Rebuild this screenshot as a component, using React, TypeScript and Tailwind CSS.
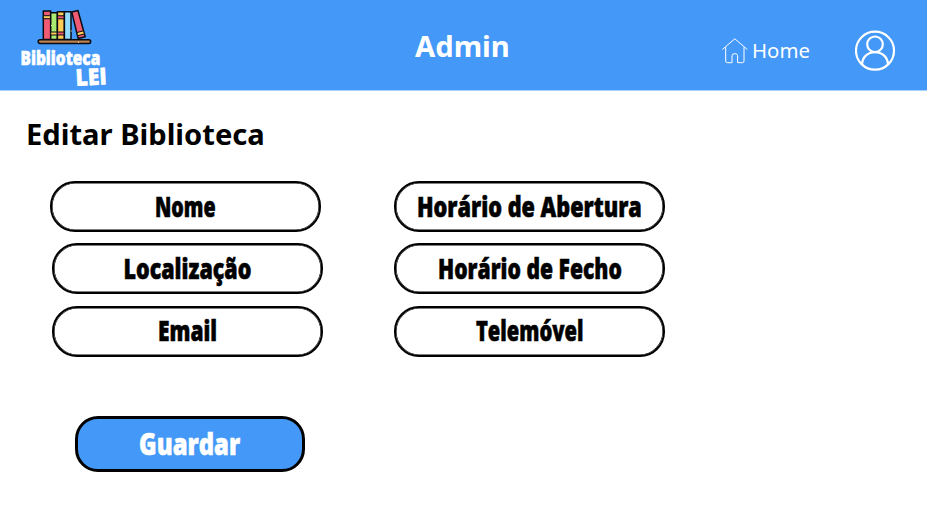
import { useLayoutEffect, useRef, useState } from "react";

// Squeezes a heavy lettering line horizontally so that it fills the given width.
function Lettering({ text, width, className = "" }: { text: string; width: number; className?: string }) {
  const ref = useRef<HTMLSpanElement>(null);
  const [scale, setScale] = useState(1);
  useLayoutEffect(() => {
    if (ref.current) setScale(width / ref.current.offsetWidth);
  }, [text, width]);
  return (
    <span className="flex justify-center" style={{ width }}>
      <span
        ref={ref}
        className={`block shrink-0 whitespace-nowrap font-['Open_Sans','Noto_Sans',sans-serif] font-extrabold [-webkit-text-stroke:0.6px_currentColor] [stroke-linejoin:round] ${className}`}
        style={{ transform: `scaleX(${scale})` }}
      >
        {text}
      </span>
    </span>
  );
}

function Field({ text, width, className = "" }: { text: string; width: number; className?: string }) {
  return (
    <button
      className={`flex h-[51px] w-[271px] items-center justify-center rounded-[25px] border-2 border-black bg-white text-black shadow-[inset_0_0_0_0.6px_#000] ${className}`}
    >
      <Lettering text={text} width={width} className="pb-[2px] text-[28px] leading-[42px]" />
    </button>
  );
}

function Books() {
  return (
    <svg className="ml-[17px] h-[36px] w-[56px]" viewBox="37 9 56 36" stroke="#080b12" strokeWidth="1.5" strokeLinejoin="round">
      <rect x="43.3" y="11" width="7.4" height="28.5" fill="#f05a73" />
      <path d="M43.3 15.7h7.4v3h-7.4z" fill="#ffd15c" strokeWidth="1" />
      <rect x="50.7" y="12.8" width="6.7" height="26.7" fill="#a9ea70" />
      <path d="M50.7 32h6.7v3h-6.7z" fill="#ffd15c" strokeWidth="1" />
      <rect x="57.4" y="11.7" width="7" height="27.8" fill="#ffcd54" />
      <path d="M57.4 15.8h7v3h-7zM57.4 32h7v3h-7z" fill="#f05a73" strokeWidth="1" />
      <rect x="64.4" y="11.7" width="6.6" height="27.8" fill="#92dcff" />
      <path d="M71.8 12.1l6.2-1.5 7.2 26.2-7 1.8z" fill="#f05a73" />
      <path d="M76.8 32.6l6.7-1.8.9 3.1-6.8 1.8z" fill="#ffd15c" strokeWidth="1" />
      <rect x="38.2" y="39.8" width="52.5" height="3.6" rx="1.8" fill="#b98250" />
      <path d="M51 25.5h1M70.7 31h1M78 42.3h1" stroke="#fff1a8" strokeWidth="1" />
    </svg>
  );
}

export default function App() {
  return (
    <div className="h-[522px] w-[927px] overflow-hidden bg-white font-['Noto_Sans',sans-serif] text-black">
      <header className="flex h-[91px] border-b border-[#a9d3fd] bg-[#4498f7] text-white">
        <div className="w-[200px] pl-[20px] pt-[9px]">
          <Books />
          <div className="mt-[4px]">
            <Lettering text="Biblioteca" width={80} className="text-[19.5px] leading-[18px]" />
          </div>
          <div className="ml-[56px]">
            <Lettering text="LEI" width={31} className="-rotate-3 text-[23px] leading-[19px]" />
          </div>
        </div>
        <h1 className="w-[522px] pl-[215px] pt-[26px] text-[29.2px] font-bold leading-[40px]">Admin</h1>
        <a className="mt-[37px] flex h-[28px] w-[133px] items-center">
          <svg className="h-[26px] w-[26px] shrink-0" viewBox="0 0 26 26" fill="none" stroke="white" strokeWidth="1" strokeLinecap="round" strokeLinejoin="round">
            <path d="M.7 11.2 12.8.8 25 11.2M3.7 9.5V23q0 1.7 1.7 1.7H10v-7q0-2 2.8-2t2.8 2v7h4.7q1.7 0 1.7-1.7V9.5" />
          </svg>
          <span className="ml-[4px] pb-[2px] text-[20.4px] leading-[28px]">Home</span>
        </a>
        <svg className="mt-[30px] h-[41px] w-[41px]" viewBox="0 0 41 41" fill="none" stroke="white" strokeWidth="2.2">
          <circle cx="20" cy="20.7" r="19" />
          <circle cx="20" cy="14.3" r="7.8" />
          <path d="M7 34.6C7.2 27.400 12.6 22.1 20 22.1S32.8 27.400 33 34.600" />
        </svg>
      </header>
      <main>
        <h2 className="pl-[26px] pt-[23px] text-[29.15px] font-bold leading-[40px]">Editar Biblioteca</h2>
        <section className="mt-[27px] flex">
          <div className="ml-[50px] flex w-[344px] flex-col gap-[11.4px]">
            <Field text="Nome" width={61} />
            <Field text="Localização" width={128} className="ml-[1.5px]" />
            <Field text="Email" width={59} className="ml-[1.5px]" />
          </div>
          <div className="flex flex-col gap-[11.4px]">
            <Field text="Horário de Abertura" width={225} />
            <Field text="Horário de Fecho" width={184} />
            <Field text="Telemóvel" width={108} />
          </div>
        </section>
        <button className="ml-[75px] mt-[59px] flex h-[56px] w-[230px] items-center justify-center rounded-[23px] border-[3px] border-black bg-[#4498f7] text-white">
          <Lettering text="Guardar" width={101} className="text-[30px] leading-[46px]" />
        </button>
      </main>
    </div>
  );
}
